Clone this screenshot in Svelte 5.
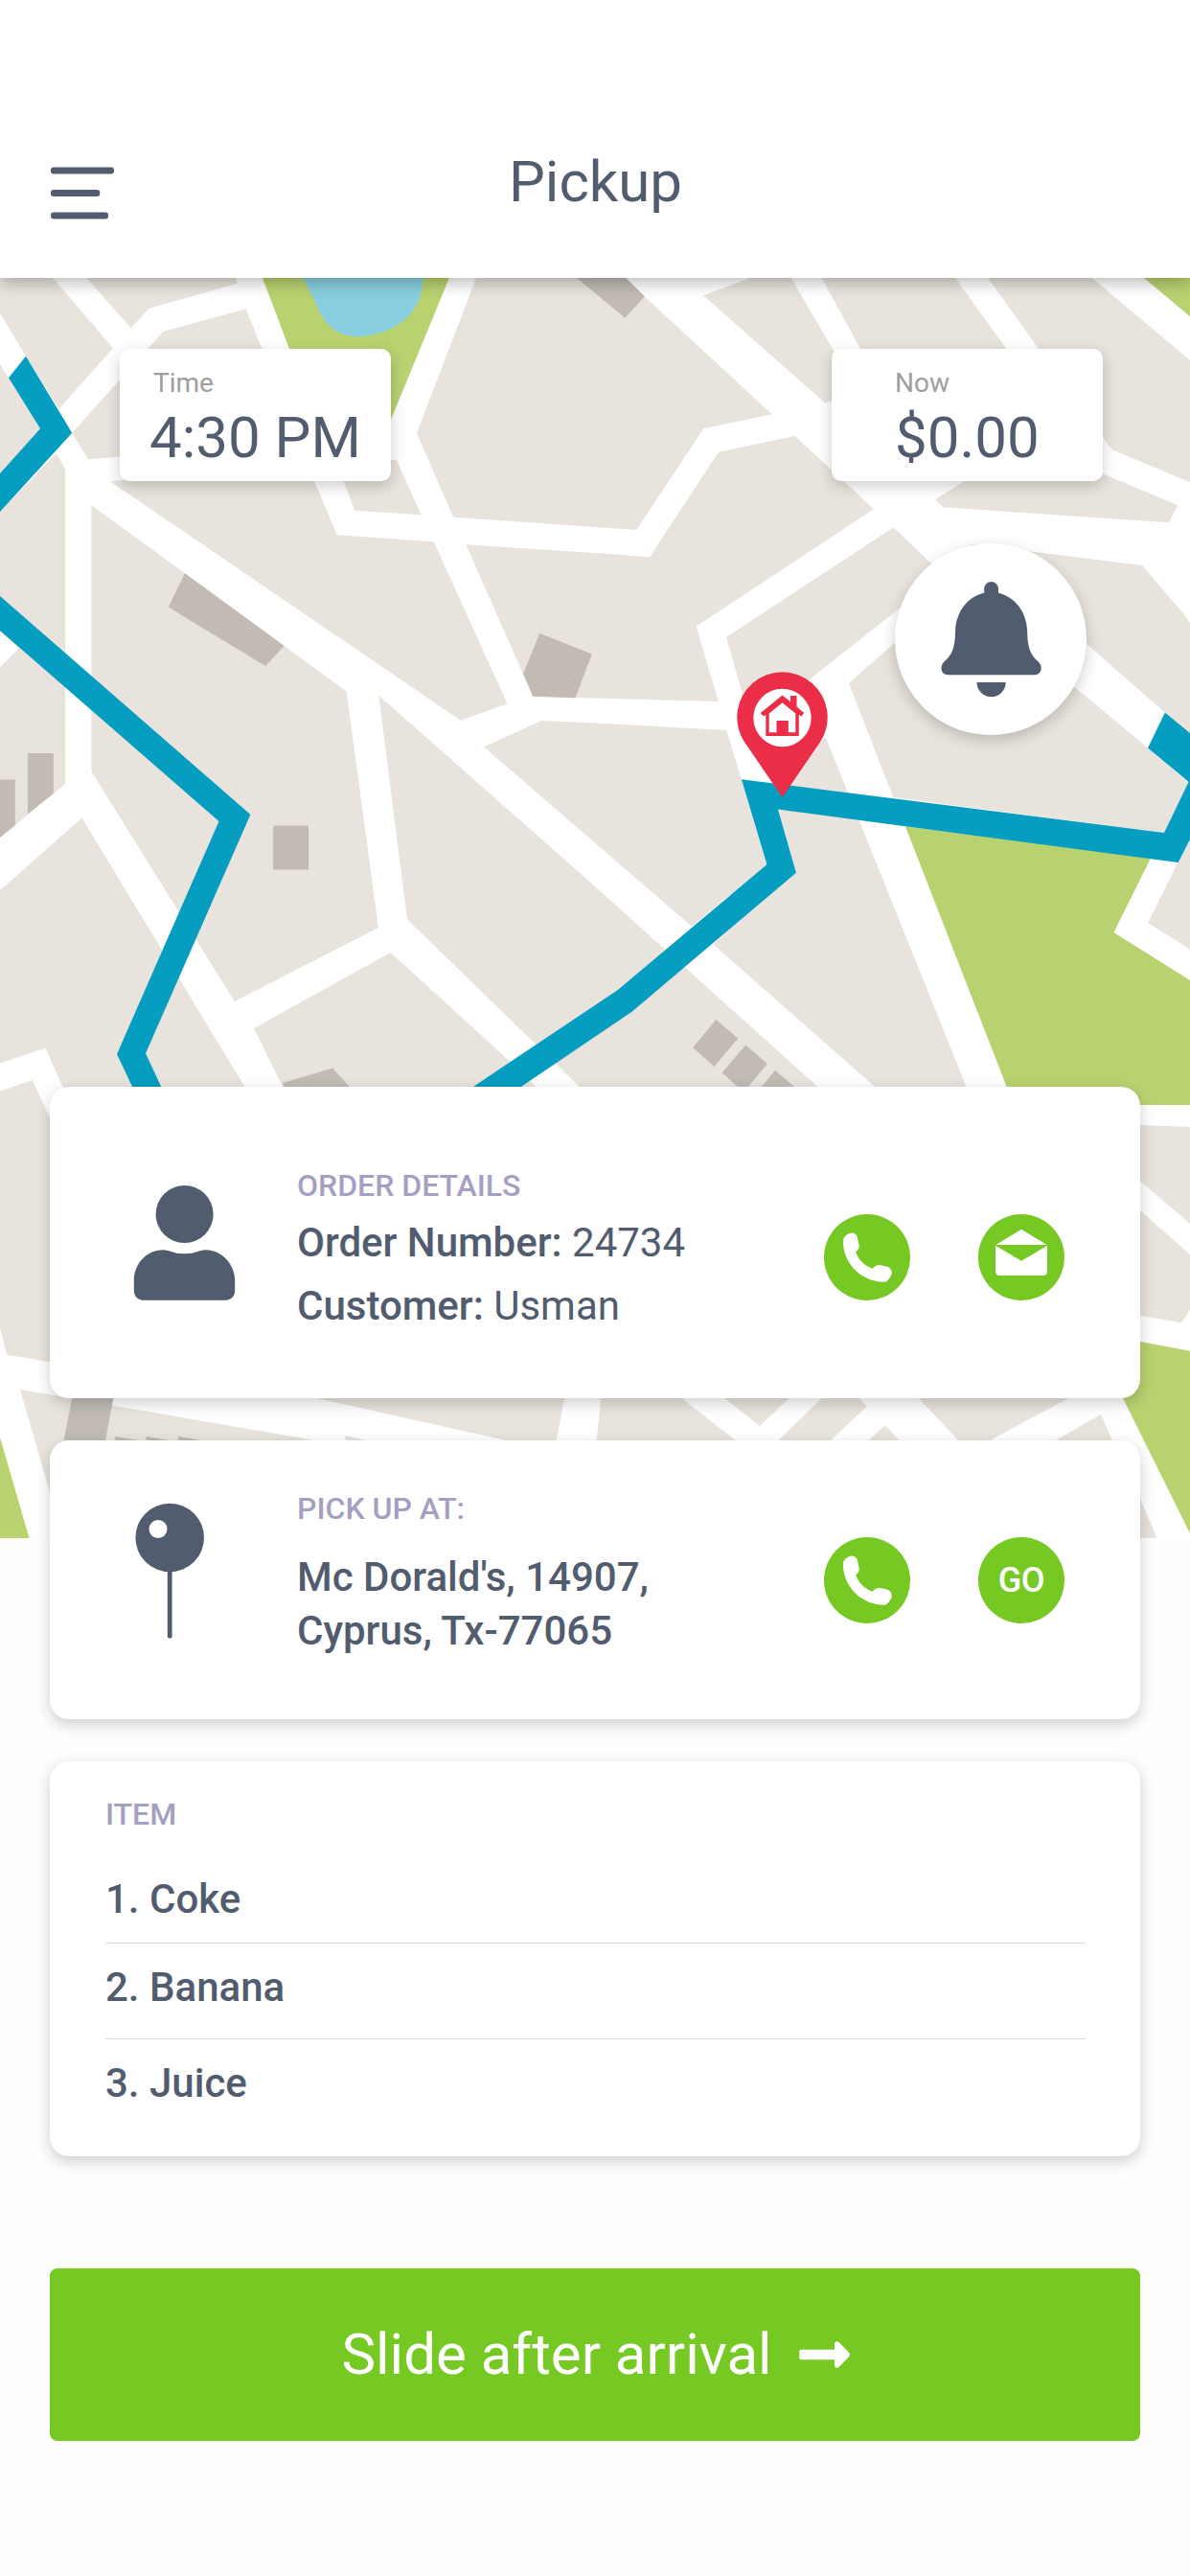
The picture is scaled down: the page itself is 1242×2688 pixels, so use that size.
<script>
  // City blocks, parks and buildings in map coordinates (1242 wide, origin at page top).
  const blocks = [
    '0,280 48,280 55,290 118,363.3 61.4,426.7 27,371.7 0,326.7',
    '83,280 90.3,290 136.6,342.3 155.6,321.7 247.5,296 244,280',
    '75.2,451.7 170.3,346 256.6,322.3 313,462 91.9,479.3',
    '0,380 42,447.3 0,494',
    '0,534 58.6,473 68.1,489.3 68.1,818 0,874',
    '95.4,527.3 192.9,598.3 296.6,673.9 361.6,721.4 394.9,967.9 244.8,1045 95.4,805',
    '114.9,502.3 320,483 351.7,558.3 452.7,565.3 529.5,734.3 480.8,751.8 258.2,600',
    '350,480 413.9,480 439.6,537.3 370.3,532.7',
    '501,280 497,290 434.9,452.3 473.3,539.7 621,550 664.2,553 734.3,447.3 805.6,432.3 672.5,309.3 643,280',
    '733.9,308.3 783.4,290 820,280 825.8,290 870.5,366.7 890,413 861,420.3',
    '852,280 990,280 1049.9,363.3 1070,395 915,395',
    '1024,280 1128,280 1242,376 1242,503.3 1160.4,469 1150.9,456 1083.6,363.3',
    '1030,485 1140,485 1150.9,494.3 1229.3,527.3 1219.8,545.3 984.6,529.3 976.3,521.3 1006,502.3',
    '486.4,568.3 621,577 678,581.3 750,471.7 829.7,455 912,531.3 726.7,653.6 749.7,732.1 556.4,726.8',
    '932.7,550.3 980,596 985,600 939.8,633.9 844.8,708.9 785,757 774.7,723 758,665',
    '886,712.9 933,671.4 950,655 1080,680 1121.6,717 1198,780.4 1241,817 1215,869 932.3,832',
    '1013,567.7 1074.5,575.3 1192,590 1234.9,640 1242,650 1242,765 1215.9,743.6 1134.7,672.5 1070,610',
    '861.8,769.6 884.4,825.7 1011,1140 920,1140 744.6,985.7 820,910 811.9,844.6 825,800',
    '395.3,725.7 621,925 860,1140 611,1140 425,959.3',
    '505,779.3 565.2,752.1 621,754.6 758.4,762 800.4,902 722,966.8 621,879.6',
    '407.5,993.9 265,1072.9 298,1140 566,1140 532.7,1107.9',
    '85.5,853.6 259,1140 68,1140 47.5,1093.6 0,1109.6 0,928.9',
    '0,1138.6 33.7,1127 51.9,1166 60,1180 60,1422.5 7.1,1413.7 0,1385',
    '1242,875 1198,963 1242,990.4',
    '1180,1173.5 1242,1176 1242,1276.7 1180,1224',
    '1180,1254 1242,1309.3 1242,1366.7 1233.3,1380.3 1180,1371',
    '1180,1540 1207.5,1605 1180,1605',
    '628,1450 700,1450 767.5,1503 773,1510 622,1510',
    '745,1450 792.9,1488.3 833,1450',
    '867,1450 889,1450 904.6,1467.7 859,1510 805,1510',
    '899,1510 923.6,1487.3 945,1510',
    '950,1450 1132,1450 1020,1510 1007,1510',
    '1090,1510 1148.9,1475.7 1164,1510',
    '290,1450 591,1450 579,1510 560,1510',
    '359.2,1497.7 415,1510 364,1510',
    '21,1450 322.8,1502 345,1510 65,1605 51.9,1556.7'
  ];

  const parks = [
    '271,280 274,290 279,303.3 345,478 391,478 408,437.7 473,280',
    '1184,280 1242,280 1242,330.3 1194,290',
    '945,862.5 1201.2,895 1162.4,972.9 1242,1022.9 1242,1153 1058,1153',
    '1180,1398 1242,1409.7 1242,1600 1165,1445',
    '0,1500 30.5,1605 0,1605'
  ];

  const buildings = [
    '593,280 602,290 652.3,331.7 672.9,309.3 643,280',
    '563.2,660.7 617.8,682.5 600.4,728.2 556.4,726.8 546.1,703.2',
    '28.9,786 55.8,786 55.8,827.9 28.9,849.3',
    '0,813.6 15.8,813.6 15.8,861 0,874',
    '192.9,598.3 175.8,633.6 277.2,695 296.6,673.9',
    '285.2,861.5 322,861.5 322,907.5 285.2,907.5',
    '747.3,1063.9 770.3,1083.6 745.4,1112.9 723.2,1092.9',
    '778.2,1090.4 800.8,1110 776,1140 753.7,1119.3',
    '809,1116.8 836,1140 790,1140',
    '347.3,1114.6 370,1140 298,1140 295,1130',
    '77,1450 120,1450 110,1503 66.5,1503',
    '120,1498.7 150,1504 150,1510 120,1510',
    '152.5,1498.7 182,1504 182,1510 152.5,1510',
    '186,1498.7 215,1504 215,1510 186,1510'
  ];

  const routes = [
    '27,371.7 75.2,451.7 0,534 0,494 42,447.3 9,394.3',
    '0,622 261.4,850 152,1099.3 171,1140 141,1140 122,1100 228.5,857 0,658',
    '773.9,813.2 1215,869 1242,813 1242,875.7 1229.7,900 811.9,844.6 830.9,910.7 659.8,1055.4 535,1140 485,1140 644.8,1033 800.4,902',
    '1215.9,743.6 1242,765 1242,817 1198,780.4'
  ];

  const items = ['Coke', 'Banana', 'Juice'];
</script>

{#snippet phone()}
  <button class="round" aria-label="Call">
    <svg width="90" height="90" viewBox="0 0 90 90">
      <path fill="#fff" d="M20 26.8C20.3 23.5 25.500 19.600 28.800 19.600C31.800 19.600 34.200 21.300 34.900 24.200L36.600 32.600C37.200 35.600 35.800 37.500 33.200 39.300C35.700 47.200 42 53.700 50.700 56.800C53 54.300 55 52.800 58 53.100L65.500 54.600C69 55.400 70.700 58 70.700 61.600C70.700 64.500 66.500 70.200 63.800 70.700C40 71.500 19 51.500 20 26.800Z" />
    </svg>
  </button>
{/snippet}

<div class="screen">
  <header>
    <button class="menu" aria-label="Menu">
      <svg width="66" height="56" viewBox="0 0 66 56">
        <rect x="0" y="0.400" width="66" height="7" rx="3" />
        <rect x="0" y="24" width="51.300" height="7" rx="3" />
        <rect x="0" y="47.500" width="60" height="7" rx="3" />
      </svg>
    </button>
    <h1>Pickup</h1>
  </header>

  <svg class="map" width="1242" height="1315" viewBox="0 290 1242 1315">
    <rect y="290" width="1242" height="1315" fill="#fff" />
    {#each blocks as points}<polygon class="block" {points} />{/each}
    {#each parks as points}<polygon class="park" {points} />{/each}
    {#each buildings as points}<polygon class="building" {points} />{/each}
    <path fill="#87cfe0" d="M310 280C322 300 328 312 334.700 328C343 343 357 351.300 374.300 351.300C400 350 441.600 336 441.600 288L442 280Z" />
    <polygon fill="#fff" points="0,659 19.800,676.800 0,696" />
    {#each routes as points}<polygon class="route" {points} />{/each}
    <g fill="#eb2d48">
      <path d="M816.500 832L776.500 773.500A47.200 47.200 0 1 1 856.500 773.500Z" />
      <circle cx="816.500" cy="749" r="30.200" fill="#fff" />
      <path d="M816.500 725.400L825 732.300V726H831.500V737.500L839.300 743.900L836 747.600L833.800 745.800V768H799.300V745.800L797 747.600L793.700 743.900ZM816.500 733.300L802.700 744.500V764.300H810.500V752H822.800V764.300H830.300V744.500Z" />
    </g>
  </svg>

  <section class="overlay">
    <div class="stats">
      <div class="stat time">
        <span class="label">Time</span>
        <span class="value">4:30 PM</span>
      </div>
      <div class="stat now">
        <span class="label">Now</span>
        <span class="value">$0.00</span>
      </div>
    </div>
    <button class="bell" aria-label="Notifications">
      <svg width="200" height="200" viewBox="0 0 200 200">
        <rect x="93.200" y="40" width="14.800" height="24" rx="7.400" />
        <path d="M100.600 51C79.500 51 63.500 69 63 92C63 112 57.500 118 51 124C46.500 129 48 137.300 56 137.300H145.200C153.200 137.300 154.700 129 150.200 124C143.700 118 138.200 112 138.200 92C137.700 69 121.700 51 100.600 51Z" />
        <path d="M85.500 145H115.700A15.100 15.100 0 0 1 85.500 145Z" />
      </svg>
    </button>
  </section>

  <main>
    <article class="card order">
      <svg class="icon" width="107" height="121" viewBox="0 0 107 121">
        <circle cx="53.600" cy="30" r="30" />
        <path d="M31 67.200C14 67.200 0.800 82 0.800 99V109Q1 119.800 12 119.800H95Q106 119.800 106.200 109V99C106.200 82 92 67.200 76 67.200C68 67.200 66 71.200 53.500 71.200C41 71.200 39 67.200 31 67.200Z" />
      </svg>
      <div class="text">
        <h2>ORDER DETAILS</h2>
        <p><b>Order Number:</b> 24734</p>
        <p><b>Customer:</b> Usman</p>
      </div>
      <div class="actions">
        {@render phone()}
        <button class="round" aria-label="Message">
          <svg width="90" height="90" viewBox="0 0 90 90" fill="#fff">
            <path d="M45 15.800L71.600 32H18.400Z" />
            <path d="M18 32.800L45 48.800L72 32.800V59.500Q72 64 67.500 64H22.500Q18 64 18 59.500Z" />
          </svg>
        </button>
      </div>
    </article>

    <article class="card pickup">
      <svg class="icon" width="107" height="142" viewBox="0 0 107 142">
        <rect x="35.800" y="66" width="4.800" height="75.500" rx="2" />
        <circle cx="38.200" cy="36.500" r="35.800" />
        <circle cx="26" cy="27.500" r="9.500" fill="#fff" />
      </svg>
      <div class="text">
        <h2>PICK UP AT:</h2>
        <address>Mc Dorald's, 14907,<br />Cyprus, Tx-77065</address>
      </div>
      <div class="actions">
        {@render phone()}
        <button class="round">GO</button>
      </div>
    </article>

    <article class="card items">
      <h2>ITEM</h2>
      <ul>
        {#each items as item, i}
          <li>{i + 1}. {item}</li>
        {/each}
      </ul>
    </article>

    <button class="slide">
      Slide after arrival
      <svg width="54" height="28" viewBox="0 0 54 28">
        <path d="M2 8.800H37V3C37 0 40 -0.500 42 1.500L52 11.800Q54 14 52 16.200L42 26.500C40 28.500 37 28 37 25V19.200H2Q0.300 19.200 0.300 17.500V10.500Q0.300 8.800 2 8.800Z" />
      </svg>
    </button>
  </main>
</div>

<style>
  :global(body) {
    background: #fefefe;
  }

  .screen {
    position: relative;
    width: 1242px;
    height: 2688px;
    overflow: hidden;
    display: flex;
    flex-direction: column;
    background: #fefefe;
    color: #515c6f;
    fill: #515c6f;
    font-family: Roboto, 'Liberation Sans', sans-serif;
  }

  button {
    padding: 0;
    border: 0;
    background: none;
    font-family: inherit;
    fill: inherit;
  }

  svg {
    display: block;
  }

  h1,
  h2,
  p,
  ul {
    margin: 0;
    padding: 0;
  }

  header {
    position: relative;
    z-index: 2;
    box-sizing: border-box;
    height: 290px;
    flex: none;
    display: grid;
    grid-template-columns: 66px 1fr 66px;
    align-items: start;
    padding: 155px 52px 0 53px;
    background: #fff;
    box-shadow: 0 5px 16px rgba(0, 0, 0, 0.28);
  }

  .menu {
    margin-top: 19px;
  }

  h1 {
    font-size: 60px;
    font-weight: 400;
    line-height: 70px;
    text-align: center;
  }

  /* The map lies behind the overlay widgets and the first two cards. */
  .map {
    position: absolute;
    top: 290px;
    left: 0;
  }

  .block {
    fill: #e8e3dc;
  }

  .park {
    fill: #b9d270;
  }

  .building {
    fill: #c1bbb4;
  }

  .route {
    fill: #059dc0;
  }

  .overlay {
    position: relative;
    height: 844px;
    flex: none;
    box-sizing: border-box;
    padding: 74px 91px 0 125px;
    display: flex;
    flex-direction: column;
    align-items: flex-end;
    gap: 65px;
  }

  .stats {
    width: 100%;
    display: flex;
    justify-content: space-between;
  }

  .stat {
    box-sizing: border-box;
    width: 283px;
    height: 138px;
    padding-top: 21px;
    border-radius: 10px;
    background: #fff;
    box-shadow: 0 5px 16px rgba(0, 0, 0, 0.2);
    display: flex;
    flex-direction: column;
  }

  .time {
    padding-left: 31px;
  }

  .now {
    padding-left: 66px;
  }

  .label {
    margin-left: 4px;
    font-size: 28px;
    line-height: 30px;
    color: #9e9e9e;
  }

  .now .label {
    margin-left: 0;
  }

  .value {
    margin-top: 7px;
    font-size: 60px;
    line-height: 70px;
    white-space: nowrap;
  }

  .bell {
    width: 200px;
    height: 200px;
    margin-right: 17px;
    border-radius: 50%;
    background: #fff;
    box-shadow: 0 5px 16px rgba(0, 0, 0, 0.2);
  }

  main {
    position: relative;
    padding: 0 52px;
    display: flex;
    flex-direction: column;
  }

  .card {
    box-sizing: border-box;
    border-radius: 20px;
    background: #fff;
    box-shadow: 0 5px 16px rgba(0, 0, 0, 0.2);
  }

  .order,
  .pickup {
    display: grid;
    grid-template-columns: 107px 1fr auto;
    column-gap: 64px;
    align-items: start;
    padding: 0 79px 0 87px;
  }

  .order {
    height: 325px;
    margin-bottom: 44px;
  }

  .order .icon {
    margin-top: 103px;
  }

  .order .text {
    margin-top: 83px;
  }

  .order .actions {
    margin-top: 133px;
  }

  .pickup {
    height: 291px;
    margin-bottom: 44px;
  }

  .pickup .icon {
    margin-top: 65px;
  }

  .pickup .text {
    margin-top: 51px;
  }

  .pickup .actions {
    margin-top: 101px;
  }

  h2 {
    font-size: 32px;
    font-weight: 500;
    line-height: 40px;
    color: #a59fc3;
  }

  p {
    font-size: 42px;
    line-height: 66px;
    white-space: nowrap;
  }

  .order h2 {
    margin-bottom: 7px;
  }

  b {
    font-weight: 500;
  }

  address {
    margin-top: 24px;
    font-size: 42px;
    font-style: normal;
    font-weight: 500;
    line-height: 56px;
    white-space: nowrap;
  }

  .actions {
    display: flex;
    gap: 71px;
  }

  .round {
    width: 90px;
    height: 90px;
    border-radius: 50%;
    background: #75c922;
    color: #fff;
    font-size: 36px;
    font-weight: 500;
    letter-spacing: -0.5px;
  }

  .items {
    height: 412px;
    padding: 35px 57px 0 58px;
  }

  ul {
    list-style: none;
    margin-top: 24px;
  }

  li {
    padding: 21px 0 28px;
    border-bottom: 1px solid #dcdcdc;
    font-size: 42px;
    font-weight: 500;
    line-height: 50px;
  }

  li:first-child {
    padding: 20px 0;
  }

  li:last-child {
    border-bottom: 0;
  }

  .slide {
    height: 180px;
    margin-top: 117px;
    padding-left: 2px;
    border-radius: 8px;
    background: #75c922;
    color: #fff;
    fill: #fff;
    display: flex;
    align-items: center;
    justify-content: center;
    gap: 28px;
    font-size: 60px;
    line-height: 70px;
  }
</style>
